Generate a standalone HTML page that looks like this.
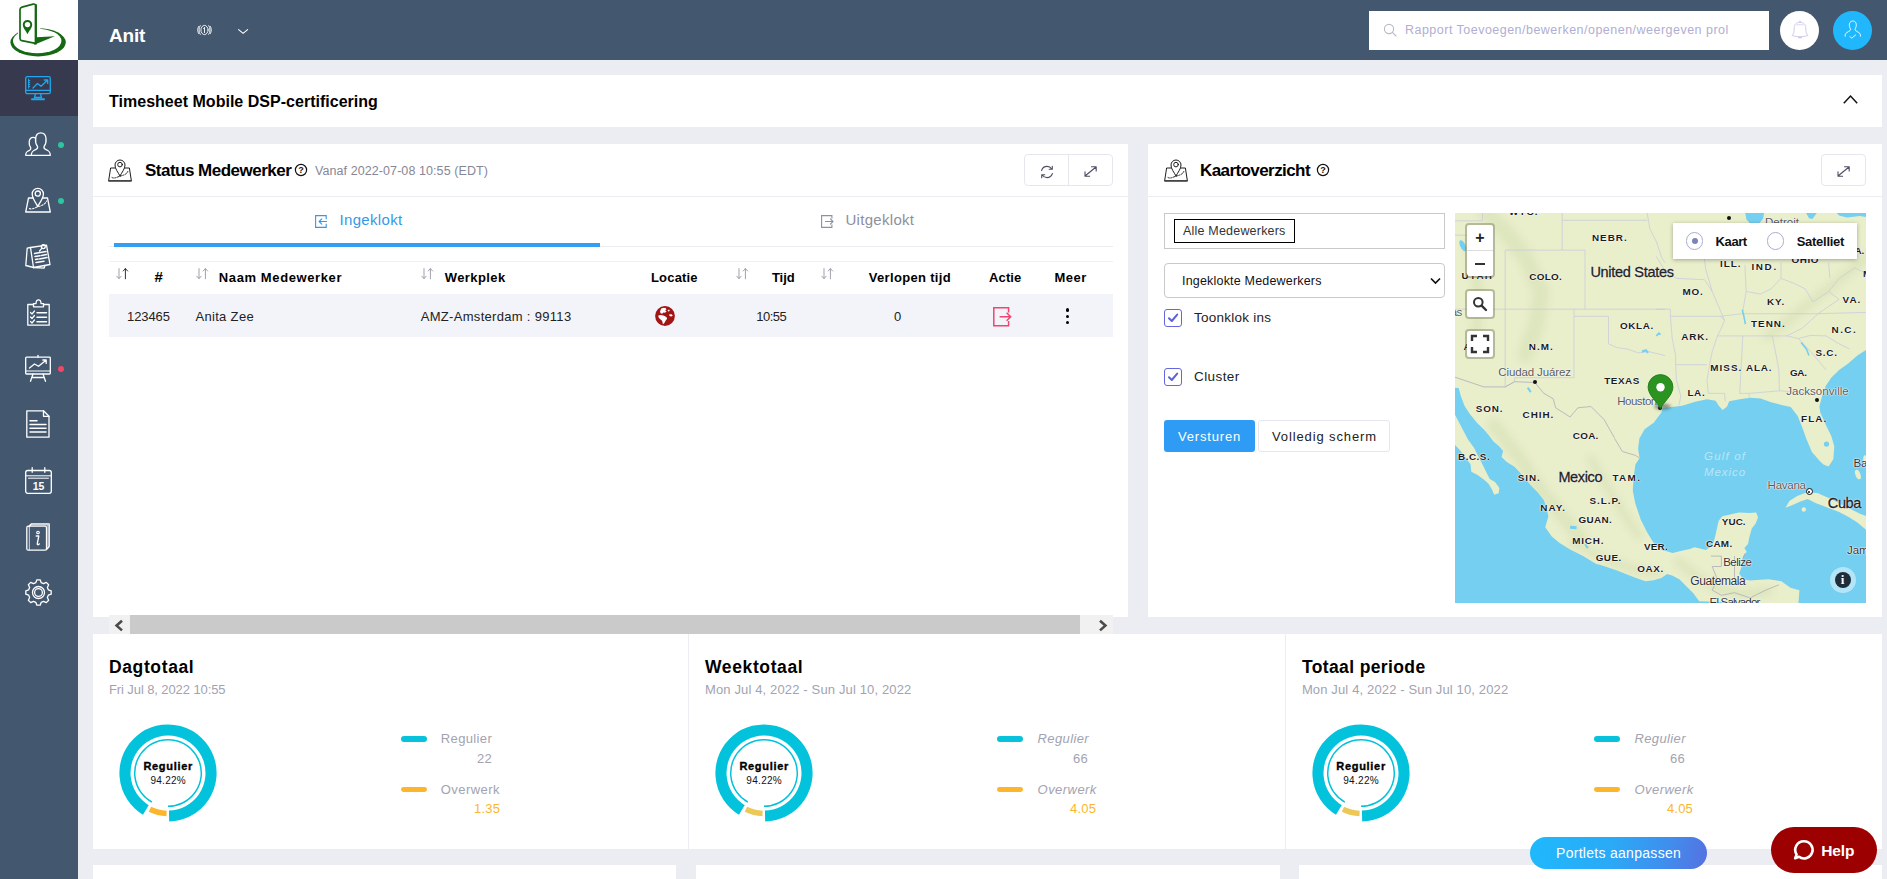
<!DOCTYPE html>
<html lang="nl"><head><meta charset="utf-8"><title>Timesheet Mobile</title>
<style>
html,body{margin:0;padding:0}
body{width:1887px;height:879px;overflow:hidden;position:relative;background:#ecedf3;font-family:"Liberation Sans",sans-serif}
svg{position:absolute;overflow:visible}
.ml span{text-shadow:0 0 1px #fff,0 0 1px #fff,0 0 2px #fff}
</style></head><body>
<div style="position:absolute;left:0px;top:0px;width:78px;height:879px;background:#43576f;"></div>
<div style="position:absolute;left:78px;top:0px;width:1809px;height:60px;background:#43576f;"></div>
<div style="position:absolute;left:0px;top:0px;width:78px;height:60px;background:#fff;"></div>
<div style="position:absolute;left:0px;top:60px;width:78px;height:56px;background:#373a4e;"></div>
<span style="position:absolute;top:26px;font:bold 19px/1 'Liberation Sans',sans-serif;color:#fff;white-space:nowrap;left:109.00px;letter-spacing:-0.2px;">Anit</span>
<div style="position:absolute;left:1369px;top:11px;width:400px;height:39px;background:#fff;"></div>
<span style="position:absolute;top:24px;font:normal 12.5px/1 'Liberation Sans',sans-serif;color:#b0aed2;white-space:nowrap;left:1405.00px;letter-spacing:0.48px;">Rapport Toevoegen/bewerken/openen/weergeven prol</span>
<div style="position:absolute;left:1780px;top:10.8px;width:39.2px;height:39.4px;background:#fff;border-radius:50%;"></div>
<div style="position:absolute;left:1832.8px;top:10.8px;width:39.4px;height:39.4px;background:#21b7fc;border-radius:50%;"></div>
<div style="position:absolute;left:57.5px;top:142px;width:6px;height:6px;background:#2fc4a0;border-radius:50%;"></div>
<div style="position:absolute;left:57.5px;top:198px;width:6px;height:6px;background:#2fc4a0;border-radius:50%;"></div>
<div style="position:absolute;left:57.5px;top:366px;width:6px;height:6px;background:#f0476b;border-radius:50%;"></div>
<svg width="26" height="25" viewBox="0 0 26 25" style="left:25px;top:76px;"><g fill="none" stroke="#22a7ee" stroke-width="1.3" stroke-linejoin="round" stroke-linecap="round"><rect x="0.7" y="0.7" width="24.6" height="17" rx="1.5"/><path d="M0.7 14.3H25.3"/><path d="M10.5 17.7L9.5 21.5H16.5L15.5 17.7"/><path d="M7 23.2H19" stroke-width="2"/><path d="M3.6 3V12.2M3.6 4.5h1.2M3.6 6.5h1.2M3.6 8.5h1.2M3.6 10.5h1.2" stroke-width="1"/><path d="M8 12L12.5 7.5L16 10.3L22.5 4.2M19.3 4h3.4v3.4"/></g></svg>
<svg width="26" height="24" viewBox="0 0 26 24" style="left:25px;top:132px;"><g fill="none" stroke="#fff" stroke-width="1.3" stroke-linejoin="round" stroke-linecap="round"><path d="M6.3 23.3C6.3 19.5 8 18.5 11 17.3C12.5 16.7 12.8 15.3 12.4 14.2C10.8 12.3 10.3 9.5 10.6 6.5C10.9 2.8 13 0.8 15.8 0.8C18.6 0.8 20.7 2.8 21 6.5C21.3 9.5 20.8 12.3 19.2 14.2C18.8 15.3 19.1 16.7 20.6 17.3C23.6 18.5 25.3 19.5 25.3 23.3Z"/><path d="M6.3 23.3H0.7C0.7 20 2 19.3 4.5 18.3C5.7 17.8 6 16.8 5.7 15.8C4.4 14.3 4 12 4.2 9.8C4.5 6.8 6 5.3 8.2 5.3C9.2 5.3 10 5.6 10.6 6.2"/></g></svg>
<svg width="26" height="26" viewBox="0 0 26 26" style="left:25px;top:187px;"><g fill="none" stroke="#fff" stroke-width="1.3" stroke-linejoin="round" stroke-linecap="round"><path d="M8 11H3.5L0.7 25H25.3L22.5 11H18"/><path d="M12.7 19.5C10.5 15 7.2 11.5 7.2 7A5.6 5.6 0 0 1 18.4 7C18.4 11.5 15 15 12.7 19.5Z"/><circle cx="12.8" cy="6.6" r="2.6"/><path d="M4.5 21.5C7 23 10 20.5 13.5 19.5C17 18.5 20 17.5 21.5 14" stroke-dasharray="1.6 1.6" stroke-width="1.1"/></g></svg>
<svg width="26" height="25" viewBox="0 0 26 25" style="left:25px;top:244px;"><g fill="none" stroke="#fff" stroke-width="1.3" stroke-linejoin="round" stroke-linecap="round"><path d="M5.5 3.5L21.5 1.2L25 20.5L8.5 23.5Z"/><path d="M5.5 3.5L2.2 4.2L0.8 21.5L8.5 23.5"/><path d="M8.5 23.5L19 24.2L20 21.5"/><circle cx="18.3" cy="2.6" r="2"/><path d="M16.8 4.3L14.5 7"/><path d="M9.5 9.5L21 7.6M10 12.5L15 11.7M16.5 11.4L21.5 10.6M10.5 15.5L13 15.1M14.5 14.9L22 13.6M11 18.5L19 17.2" stroke-width="1.5"/></g></svg>
<svg width="23" height="27" viewBox="0 0 23 27" style="left:26.5px;top:298.5px;"><g fill="none" stroke="#fff" stroke-width="1.3" stroke-linejoin="round" stroke-linecap="round"><path d="M6.5 5.5H0.8V26.2H22.2V5.5H16.5"/><path d="M6.5 7.8V4.6H9C9 2.5 9.8 0.8 11.5 0.8C13.2 0.8 14 2.5 14 4.6H16.5V7.8Z"/><path d="M3.5 13.5L5 15L7.5 12M3.5 18L5 19.5L7.5 16.5M3.5 22.5L5 24L7.5 21" stroke-width="1.2"/><path d="M10 13.7H19.5M10 18.2H19.5M10 22.7H19.5" stroke-width="1.5"/></g></svg>
<svg width="26" height="27" viewBox="0 0 26 27" style="left:25px;top:354.5px;"><g fill="none" stroke="#fff" stroke-width="1.3" stroke-linejoin="round" stroke-linecap="round"><path d="M13 0.5V2.2"/><rect x="0.7" y="2.2" width="24.6" height="16.8" rx="0.8"/><path d="M0.7 16H25.3" stroke-width="1"/><path d="M8 19L5.5 26.3M18 19L20.5 26.3M6.8 22.5H19.2"/><path d="M4.5 13L9.5 9L13.5 11.3L21 5.2M17.8 5h3.4v3.4"/></g></svg>
<svg width="24" height="28" viewBox="0 0 24 28" style="left:26px;top:410px;"><g fill="none" stroke="#fff" stroke-width="1.3" stroke-linejoin="round" stroke-linecap="round"><path d="M0.8 0.8H17.5L23 6.3V27.2H0.8Z"/><path d="M17.5 0.8V6.3H23"/><path d="M4 10.8H11M4 14.5H20M4 18.2H20M4 21.9H20" stroke-width="1.5"/></g></svg>
<svg width="27" height="27" viewBox="0 0 27 27" style="left:24.5px;top:466.5px;"><g fill="none" stroke="#fff" stroke-width="1.3" stroke-linejoin="round" stroke-linecap="round"><rect x="0.7" y="3.5" width="25.6" height="22.8" rx="2"/><path d="M0.7 8.8H26.3M3.5 11.2H23.5" stroke-width="1"/><path d="M7.2 0.7V5.3M19.8 0.7V5.3"/></g><text x="13.5" y="23" text-anchor="middle" font-family="Liberation Sans,sans-serif" font-weight="bold" font-size="10.5" fill="#fff">15</text></svg>
<svg width="24" height="28" viewBox="0 0 24 28" style="left:26px;top:522.5px;"><g fill="none" stroke="#fff" stroke-width="1.3" stroke-linejoin="round" stroke-linecap="round"><path d="M3 3.5L5.5 0.8H23.2V23.5L20.5 26.5"/><rect x="0.8" y="3.2" width="19.7" height="24" rx="1.5"/><path d="M3.3 3.5V27M4.2 1.9H22V24.8" stroke-width="0.8"/><circle cx="12" cy="9.5" r="1.3" stroke-width="1.1"/><path d="M10.2 13H12.8L11.3 20.5C11 22 12.5 22 13.2 20.8M10.8 21.5" stroke-width="1.3"/></g></svg>
<svg width="27" height="27" viewBox="0 0 27 27" style="left:24.5px;top:578.5px;"><g fill="none" stroke="#fff" stroke-width="1.3" stroke-linejoin="round" stroke-linecap="round"><path d="M10.78 3.67L11.84 0.81L15.16 0.81L16.22 3.67L18.53 4.63L21.30 3.35L23.65 5.70L22.37 8.47L23.33 10.78L26.19 11.84L26.19 15.16L23.33 16.22L22.37 18.53L23.65 21.30L21.30 23.65L18.53 22.37L16.22 23.33L15.16 26.19L11.84 26.19L10.78 23.33L8.47 22.37L5.70 23.65L3.35 21.30L4.63 18.53L3.67 16.22L0.81 15.16L0.81 11.84L3.67 10.78L4.63 8.47L3.35 5.70L5.70 3.35L8.47 4.63Z"/><circle cx="13.5" cy="13.5" r="6"/><circle cx="13.5" cy="13.5" r="3.9"/></g></svg>
<svg width="78" height="60" viewBox="0 0 78 60" style="left:0px;top:0px;"><ellipse cx="38.1" cy="42.3" rx="27.7" ry="14.1" fill="#156912"/>
<ellipse cx="37.2" cy="41.0" rx="24.2" ry="12.3" fill="#fff"/>
<polygon points="17.6,20 40.6,20 40.2,28.7 45,31 38,36 19,36 17.6,32.2" fill="#fff"/>
<polygon points="36.5,37.3 54.8,36.2 34.2,44.8 33,42" fill="#156912"/>
<path d="M20 9.6Q20 7.6 22 7.1L33.2 4.1Q35.6 3.6 35.6 6V43.4L21.8 40.6Q20 40.2 20 38.4Z" fill="#fff" stroke="#156912" stroke-width="1.7" stroke-linejoin="round"/>
<path d="M35.9 5V43.6" stroke="#156912" stroke-width="2.1" stroke-linecap="round"/>
<path d="M27.5 34.3C26 31 22.8 28 22.8 24.6A4.7 4.7 0 0 1 32.2 24.6C32.2 28 29 31 27.5 34.3Z" fill="#156912"/>
<circle cx="27.5" cy="24.6" r="2.7" fill="#fff"/></svg>
<div style="position:absolute;left:93px;top:75px;width:1789px;height:52px;background:#fff;"></div>
<span style="position:absolute;top:94px;font:bold 16px/1 'Liberation Sans',sans-serif;color:#000;white-space:nowrap;left:109.00px;letter-spacing:0.02px;">Timesheet Mobile DSP-certificering</span>
<div style="position:absolute;left:93px;top:144px;width:1035px;height:473px;background:#fff;"></div>
<div style="position:absolute;left:93px;top:196px;width:1035px;height:1px;background:#ecedf3;"></div>
<span style="position:absolute;top:162px;font:bold 17px/1 'Liberation Sans',sans-serif;color:#000;white-space:nowrap;left:145.00px;letter-spacing:-0.51px;">Status Medewerker</span>
<span style="position:absolute;top:165px;font:normal 12.5px/1 'Liberation Sans',sans-serif;color:#858796;white-space:nowrap;left:315.00px;letter-spacing:0.08px;">Vanaf 2022-07-08 10:55 (EDT)</span>
<div style="position:absolute;left:1024px;top:154.3px;width:88.6px;height:31.4px;background:#fff;box-sizing:border-box;border:1px solid #e6e7ee;border-radius:4px;"></div>
<div style="position:absolute;left:1068px;top:155px;width:1px;height:30px;background:#e6e7ee;"></div>
<span style="position:absolute;top:212px;font:normal 15px/1 'Liberation Sans',sans-serif;color:#3699e8;white-space:nowrap;left:339.50px;letter-spacing:0.33px;">Ingeklokt</span>
<span style="position:absolute;top:212px;font:normal 15px/1 'Liberation Sans',sans-serif;color:#8d90a0;white-space:nowrap;left:845.50px;letter-spacing:0.29px;">Uitgeklokt</span>
<div style="position:absolute;left:109px;top:246px;width:1004px;height:1px;background:#ecedf3;"></div>
<div style="position:absolute;left:114px;top:243px;width:486px;height:4px;background:#349ef3;"></div>
<div style="position:absolute;left:109px;top:261px;width:1004px;height:1px;background:#f0f1f6;"></div>
<span style="position:absolute;top:269px;font:bold 15px/1 'Liberation Sans',sans-serif;color:#000;white-space:nowrap;left:154.60px;">#</span>
<span style="position:absolute;top:271px;font:bold 13px/1 'Liberation Sans',sans-serif;color:#000;white-space:nowrap;left:218.80px;letter-spacing:0.61px;">Naam Medewerker</span>
<span style="position:absolute;top:271px;font:bold 13px/1 'Liberation Sans',sans-serif;color:#000;white-space:nowrap;left:444.70px;letter-spacing:0.43px;">Werkplek</span>
<span style="position:absolute;top:271px;font:bold 13px/1 'Liberation Sans',sans-serif;color:#000;white-space:nowrap;left:651.00px;letter-spacing:0.18px;">Locatie</span>
<span style="position:absolute;top:271px;font:bold 13px/1 'Liberation Sans',sans-serif;color:#000;white-space:nowrap;left:772.00px;letter-spacing:-0.09px;">Tijd</span>
<span style="position:absolute;top:271px;font:bold 13px/1 'Liberation Sans',sans-serif;color:#000;white-space:nowrap;left:868.80px;letter-spacing:0.32px;">Verlopen tijd</span>
<span style="position:absolute;top:271px;font:bold 13px/1 'Liberation Sans',sans-serif;color:#000;white-space:nowrap;left:989.00px;letter-spacing:0.14px;">Actie</span>
<span style="position:absolute;top:271px;font:bold 13px/1 'Liberation Sans',sans-serif;color:#000;white-space:nowrap;left:1054.40px;letter-spacing:0.54px;">Meer</span>
<div style="position:absolute;left:109px;top:294px;width:1004px;height:43px;background:#f3f4f9;"></div>
<span style="position:absolute;top:310px;font:normal 13px/1 'Liberation Sans',sans-serif;color:#222;white-space:nowrap;left:127.00px;letter-spacing:-0.1px;">123465</span>
<span style="position:absolute;top:310px;font:normal 13px/1 'Liberation Sans',sans-serif;color:#222;white-space:nowrap;left:195.40px;letter-spacing:0.33px;">Anita Zee</span>
<span style="position:absolute;top:310px;font:normal 13px/1 'Liberation Sans',sans-serif;color:#222;white-space:nowrap;left:420.70px;letter-spacing:0.31px;">AMZ-Amsterdam : 99113</span>
<span style="position:absolute;top:310px;font:normal 13px/1 'Liberation Sans',sans-serif;color:#222;white-space:nowrap;left:756.20px;letter-spacing:-0.47px;">10:55</span>
<span style="position:absolute;top:310px;font:normal 13px/1 'Liberation Sans',sans-serif;color:#222;white-space:nowrap;left:894.00px;">0</span>
<div style="position:absolute;left:1065.6px;top:308.40000000000003px;width:3.4px;height:3.4px;background:#000;border-radius:50%;"></div>
<div style="position:absolute;left:1065.6px;top:314.6px;width:3.4px;height:3.4px;background:#000;border-radius:50%;"></div>
<div style="position:absolute;left:1065.6px;top:320.90000000000003px;width:3.4px;height:3.4px;background:#000;border-radius:50%;"></div>
<div style="position:absolute;left:109px;top:615px;width:1004px;height:18.5px;background:#f1f1f1;"></div>
<div style="position:absolute;left:130px;top:615px;width:950px;height:18.5px;background:#cacaca;"></div>
<div style="position:absolute;left:1148px;top:144px;width:734px;height:473px;background:#fff;"></div>
<div style="position:absolute;left:1148px;top:196px;width:734px;height:1px;background:#ecedf3;"></div>
<span style="position:absolute;top:162px;font:bold 17px/1 'Liberation Sans',sans-serif;color:#000;white-space:nowrap;left:1200.00px;letter-spacing:-0.58px;">Kaartoverzicht</span>
<div style="position:absolute;left:1821px;top:154.2px;width:44.5px;height:31.5px;background:#fff;box-sizing:border-box;border:1px solid #e6e7ee;border-radius:4px;"></div>
<div style="position:absolute;left:1164px;top:213px;width:280.5px;height:36px;background:#fff;box-sizing:border-box;border:1px solid #c9c9c9;"></div>
<div style="position:absolute;left:1174px;top:219px;width:120.5px;height:24px;background:#fff;box-sizing:border-box;border:1px solid #000;"></div>
<span style="position:absolute;top:225px;font:normal 12.5px/1 'Liberation Sans',sans-serif;color:#333;white-space:nowrap;left:1183.00px;letter-spacing:0.2px;">Alle Medewerkers</span>
<div style="position:absolute;left:1164px;top:262.5px;width:280.5px;height:35.5px;background:#fff;box-sizing:border-box;border:1px solid #c9c9c9;border-radius:4px;"></div>
<span style="position:absolute;top:275px;font:normal 12.5px/1 'Liberation Sans',sans-serif;color:#111;white-space:nowrap;left:1182.00px;letter-spacing:0.19px;">Ingeklokte Medewerkers</span>
<div style="position:absolute;left:1164px;top:309px;width:18px;height:18px;background:#fff;box-sizing:border-box;border:1px solid #6467dd;border-radius:3px;"></div>
<div style="position:absolute;left:1164px;top:368px;width:18px;height:18px;background:#fff;box-sizing:border-box;border:1px solid #6467dd;border-radius:3px;"></div>
<span style="position:absolute;top:311px;font:normal 13.5px/1 'Liberation Sans',sans-serif;color:#222;white-space:nowrap;left:1194.00px;letter-spacing:0.24px;">Toonklok ins</span>
<span style="position:absolute;top:370px;font:normal 13.5px/1 'Liberation Sans',sans-serif;color:#222;white-space:nowrap;left:1194.00px;letter-spacing:0.42px;">Cluster</span>
<div style="position:absolute;left:1164px;top:420px;width:91px;height:32px;background:#2e9cf4;border-radius:3px;"></div>
<span style="position:absolute;top:430px;font:normal 13px/1 'Liberation Sans',sans-serif;color:#fff;white-space:nowrap;left:1178.00px;letter-spacing:0.82px;">Versturen</span>
<div style="position:absolute;left:1258.3px;top:420px;width:132.2px;height:32px;background:#fff;box-sizing:border-box;border:1px solid #e6e7ee;border-radius:3px;"></div>
<span style="position:absolute;top:430px;font:normal 13px/1 'Liberation Sans',sans-serif;color:#222;white-space:nowrap;left:1272.00px;letter-spacing:0.88px;">Volledig scherm</span>
<div class="ml" style="position:absolute;left:1455px;top:213px;width:411px;height:390px;overflow:hidden;background:#75cff0">
<svg width="411" height="390" viewBox="0 0 411 390" style="left:0;top:0">
<rect width="411" height="390" fill="#75cff0"/>
<polygon points="0.0,0.0 411.0,0.0 411.0,137.0 402.4,142.5 393.2,150.4 384.1,156.9 376.2,164.7 371.0,172.6 367.1,183.1 364.4,193.5 365.2,199.2 371.0,212.3 376.2,222.8 379.3,233.2 378.3,246.3 373.6,253.4 368.4,251.5 365.2,248.4 356.9,239.0 351.4,225.9 346.9,213.6 342.7,203.1 335.7,194.0 326.5,191.9 316.1,189.3 305.6,185.4 295.1,184.8 284.7,186.2 274.2,188.2 272.1,193.5 267.7,197.1 263.8,192.7 260.6,187.7 252.0,186.2 240.2,188.8 227.2,192.7 216.7,194.0 207.5,195.3 206.6,199.2 198.7,209.7 189.6,216.2 184.4,225.4 183.1,235.8 184.6,245.0 180.4,251.5 178.6,264.6 177.8,277.7 180.4,290.8 185.7,306.4 192.2,319.5 198.7,330.0 206.5,337.1 213.3,338.8 217.8,339.9 224.6,338.2 234.9,335.9 239.4,334.2 245.1,335.4 250.8,337.1 257.6,332.5 259.9,324.5 262.2,314.3 263.7,307.8 267.3,303.3 275.0,301.4 284.0,299.6 294.3,300.1 301.3,299.4 303.0,304.6 300.7,310.4 296.8,315.6 294.3,324.6 293.0,331.0 289.4,335.1 291.7,338.7 287.8,343.8 286.5,354.1 284.2,360.5 287.8,365.7 294.3,367.6 313.5,366.3 326.4,368.3 335.4,374.7 344.4,377.3 343.4,391.4 244.2,388.3 238.3,380.3 231.5,373.5 224.6,366.6 217.8,362.7 212.1,360.9 206.4,364.9 198.5,367.2 190.5,368.3 182.5,365.5 173.4,362.1 162.1,357.5 151.8,354.1 145.0,351.8 141.2,350.9 128.1,343.1 115.1,336.5 104.6,330.0 96.8,323.4 90.2,314.3 93.4,303.3 91.0,292.8 88.8,286.9 82.9,279.5 75.5,272.1 69.5,264.7 63.6,258.0 59.2,253.6 51.8,249.1 46.6,243.9 48.1,238.0 44.4,233.6 38.5,228.4 34.0,222.5 29.6,217.3 22.2,209.9 14.8,201.0 9.6,192.9 5.9,183.3 3.7,175.1 0.0,174.7" fill="#e9eecb"/>
<polygon points="0.0,201.8 4.4,209.9 8.9,218.8 13.3,226.9 19.2,235.1 22.9,242.5 27.4,251.3 31.1,258.7 34.8,266.1 40.0,269.1 44.4,275.0 43.7,280.2 39.2,281.7 37.0,276.5 33.3,270.6 28.1,266.1 22.2,261.7 16.3,258.7 15.5,251.3 8.9,242.5 4.4,236.5 0.0,232.1" fill="#e9eecb"/>
<polygon points="330.4,294.7 334.4,288.1 342.2,282.9 352.7,279.0 363.1,280.3 373.6,285.0 384.1,290.2 394.5,295.5 405.0,300.7 411.8,303.3 411.8,317.4 402.4,309.6 394.5,304.4 384.1,299.1 371.0,293.9 360.5,290.0 352.7,286.0 344.8,288.7 337.0,292.3" fill="#e9eecb"/>
<defs><filter id="tb" x="-20%" y="-20%" width="140%" height="140%"><feGaussianBlur stdDeviation="3.2"/></filter><clipPath id="lc"><polygon points="0.0,0.0 411.0,0.0 411.0,137.0 402.4,142.5 393.2,150.4 384.1,156.9 376.2,164.7 371.0,172.6 367.1,183.1 364.4,193.5 365.2,199.2 371.0,212.3 376.2,222.8 379.3,233.2 378.3,246.3 373.6,253.4 368.4,251.5 365.2,248.4 356.9,239.0 351.4,225.9 346.9,213.6 342.7,203.1 335.7,194.0 326.5,191.9 316.1,189.3 305.6,185.4 295.1,184.8 284.7,186.2 274.2,188.2 272.1,193.5 267.7,197.1 263.8,192.7 260.6,187.7 252.0,186.2 240.2,188.8 227.2,192.7 216.7,194.0 207.5,195.3 206.6,199.2 198.7,209.7 189.6,216.2 184.4,225.4 183.1,235.8 184.6,245.0 180.4,251.5 178.6,264.6 177.8,277.7 180.4,290.8 185.7,306.4 192.2,319.5 198.7,330.0 206.5,337.1 213.3,338.8 217.8,339.9 224.6,338.2 234.9,335.9 239.4,334.2 245.1,335.4 250.8,337.1 257.6,332.5 259.9,324.5 262.2,314.3 263.7,307.8 267.3,303.3 275.0,301.4 284.0,299.6 294.3,300.1 301.3,299.4 303.0,304.6 300.7,310.4 296.8,315.6 294.3,324.6 293.0,331.0 289.4,335.1 291.7,338.7 287.8,343.8 286.5,354.1 284.2,360.5 287.8,365.7 294.3,367.6 313.5,366.3 326.4,368.3 335.4,374.7 344.4,377.3 343.4,391.4 244.2,388.3 238.3,380.3 231.5,373.5 224.6,366.6 217.8,362.7 212.1,360.9 206.4,364.9 198.5,367.2 190.5,368.3 182.5,365.5 173.4,362.1 162.1,357.5 151.8,354.1 145.0,351.8 141.2,350.9 128.1,343.1 115.1,336.5 104.6,330.0 96.8,323.4 90.2,314.3 93.4,303.3 91.0,292.8 88.8,286.9 82.9,279.5 75.5,272.1 69.5,264.7 63.6,258.0 59.2,253.6 51.8,249.1 46.6,243.9 48.1,238.0 44.4,233.6 38.5,228.4 34.0,222.5 29.6,217.3 22.2,209.9 14.8,201.0 9.6,192.9 5.9,183.3 3.7,175.1 0.0,174.7"/></clipPath></defs>
<g clip-path="url(#lc)"><g filter="url(#tb)" fill="none" stroke="#cfdcae" stroke-linecap="round" stroke-linejoin="round" opacity="0.42">
<polyline points="31.4,0.0 52.3,20.9 70.6,44.5 86.3,78.5 81.1,112.4 70.6,141.2" stroke-width="16"/>
<polyline points="15.7,31.4 23.5,78.5 20.9,125.5" stroke-width="10"/>
<polyline points="39.2,212.3 65.4,246.3 86.3,277.7 109.8,306.4 125.5,324.7" stroke-width="13"/>
<polyline points="136.0,246.3 151.7,272.4 167.4,298.6 183.1,322.1" stroke-width="8"/>
<polyline points="117.7,330.0 146.4,344.4 177.8,356.1 201.4,360.1" stroke-width="8"/>
<polyline points="223.6,349.0 242.8,364.4 262.1,376.0 287.8,381.1 313.5,378.5" stroke-width="9"/>
<polyline points="313.4,122.9 337.0,104.6 363.1,83.7 389.3,62.8 411.0,44.5" stroke-width="9"/>
</g></g>
<circle cx="348.8" cy="296.5" r="2.2" fill="#e9eecb"/>
<ellipse cx="402.9" cy="261.5" rx="2.5" ry="5" fill="#e9eecb" transform="rotate(-20 402.9 261.5)"/>
<ellipse cx="410.2" cy="246.3" rx="2" ry="4" fill="#e9eecb"/>
<polygon points="290.2,0.0 291.5,6.5 295.1,10.5 304.3,10.5 308.2,5.2 309.0,0.0" fill="#75cff0"/>
<polygon points="351.1,0.0 354.0,5.2 357.4,6.0 361.8,0.0" fill="#75cff0"/>
<polygon points="381.7,0.0 384.1,2.6 391.9,4.4 405.0,3.1 411.8,4.2 411.8,0.0" fill="#75cff0"/>
<ellipse cx="7.8" cy="32.7" rx="2.6" ry="6" fill="#75cff0" transform="rotate(-25 7.8 32.7)"/>
<circle cx="371.5" cy="231.1" r="2.6" fill="#75cff0"/>
<polyline points="50.2,37.1 50.2,173.9" fill="none" stroke="#c6c9de" stroke-width="0.7"/>
<polyline points="50.2,37.1 130.0,37.1 130.0,96.2" fill="none" stroke="#c6c9de" stroke-width="0.7"/>
<polyline points="0.0,96.2 210.0,96.2" fill="none" stroke="#c6c9de" stroke-width="0.7"/>
<polyline points="119.0,96.2 119.0,164.7 59.6,164.7 59.6,168.7 50.2,173.9" fill="none" stroke="#c6c9de" stroke-width="0.7"/>
<polyline points="119.0,103.3 153.5,103.3 153.5,130.8 162.1,134.7 172.6,136.0 183.1,139.9 193.5,138.6 210.0,142.5" fill="none" stroke="#c6c9de" stroke-width="0.7"/>
<polyline points="107.2,0.0 107.2,37.1" fill="none" stroke="#c6c9de" stroke-width="0.7"/>
<polyline points="107.2,7.3 192.2,7.3" fill="none" stroke="#c6c9de" stroke-width="0.7"/>
<polyline points="192.2,0.0 194.8,15.7 201.4,28.8 206.6,44.5 210.0,49.7" fill="none" stroke="#c6c9de" stroke-width="0.7"/>
<polyline points="27.5,0.0 27.5,7.8 0.0,7.8" fill="none" stroke="#c6c9de" stroke-width="0.7"/>
<polyline points="0.0,22.2 11.8,22.2" fill="none" stroke="#c6c9de" stroke-width="0.7"/>
<polyline points="0.0,164.2 28.8,173.9 50.2,173.9" fill="none" stroke="#aeadbb" stroke-width="0.8"/>
<polyline points="50.2,173.9 59.6,168.7 79.8,169.5 88.9,180.4 98.1,185.7 100.7,194.8 115.1,204.0 122.9,194.8 136.0,193.5 149.1,206.6 159.5,224.9" fill="none" stroke="#aeadbb" stroke-width="0.8"/>
<polyline points="159.5,225.4 167.4,238.5 180.4,242.4 184.6,245.0" fill="none" stroke="#aeadbb" stroke-width="0.8"/>
<polyline points="201.0,96.2 215.4,96.2 215.4,103.3 265.1,103.3" fill="none" stroke="#c6c9de" stroke-width="0.7"/>
<polyline points="215.4,103.3 217.2,125.5 220.6,142.5 220.6,151.7 252.0,151.7" fill="none" stroke="#c6c9de" stroke-width="0.7"/>
<polyline points="220.6,151.7 221.4,167.4 225.8,183.1 224.0,192.2" fill="none" stroke="#c6c9de" stroke-width="0.7"/>
<polyline points="265.1,103.3 269.5,107.2 266.4,115.1 262.5,122.9 257.2,138.6 254.6,151.7 252.0,167.4 253.3,180.4 269.5,180.4 270.3,188.3" fill="none" stroke="#c6c9de" stroke-width="0.7"/>
<polyline points="262.5,122.9 331.8,122.9" fill="none" stroke="#c6c9de" stroke-width="0.7"/>
<polyline points="265.1,103.3 287.3,100.7 363.1,100.7 411.0,99.4" fill="none" stroke="#c6c9de" stroke-width="0.7"/>
<polyline points="287.8,122.9 284.7,180.4 293.8,180.4 294.6,185.7" fill="none" stroke="#c6c9de" stroke-width="0.7"/>
<polyline points="317.4,122.9 323.9,156.9 324.4,177.8 293.8,180.4" fill="none" stroke="#c6c9de" stroke-width="0.7"/>
<polyline points="324.4,177.8 357.9,180.4 360.5,183.1" fill="none" stroke="#c6c9de" stroke-width="0.7"/>
<polyline points="331.8,122.9 343.5,125.5 357.9,141.2 371.0,156.9" fill="none" stroke="#c6c9de" stroke-width="0.7"/>
<polyline points="331.8,122.9 347.4,115.1 363.1,100.7" fill="none" stroke="#c6c9de" stroke-width="0.7"/>
<polyline points="343.5,125.5 355.3,122.4 371.0,122.9 384.1,130.8 394.5,136.0" fill="none" stroke="#c6c9de" stroke-width="0.7"/>
<polyline points="201.0,43.1 211.5,60.1 221.9,65.4 249.4,66.7 257.2,78.5 269.5,107.2" fill="none" stroke="#c6c9de" stroke-width="0.7"/>
<polyline points="249.4,45.8 250.7,56.2 257.2,78.5" fill="none" stroke="#c6c9de" stroke-width="0.7"/>
<polyline points="289.9,52.3 291.2,78.5 287.3,100.7" fill="none" stroke="#c6c9de" stroke-width="0.7"/>
<polyline points="291.2,78.5 305.6,81.1 316.1,75.8 326.0,65.4 326.0,49.7" fill="none" stroke="#c6c9de" stroke-width="0.7"/>
<polyline points="326.0,65.4 339.6,70.6 350.1,75.8 357.9,88.9 373.6,78.5 384.1,86.3 363.1,100.7" fill="none" stroke="#c6c9de" stroke-width="0.7"/>
<polyline points="373.6,78.5 384.1,65.4 399.7,54.9 411.0,60.1" fill="none" stroke="#c6c9de" stroke-width="0.7"/>
<polyline points="373.6,49.7 374.9,65.4" fill="none" stroke="#c6c9de" stroke-width="0.7"/>
<polyline points="255.9,343.1 266.4,343.1 266.4,353.5 257.2,353.5 262.5,366.6 257.2,377.1" fill="none" stroke="#aeadbb" stroke-width="0.8"/>
<polyline points="279.5,343.1 279.5,369.2" fill="none" stroke="#aeadbb" stroke-width="0.8"/>
<polyline points="289.9,340.4 287.3,348.3" fill="none" stroke="#aeadbb" stroke-width="0.8"/>
<polyline points="279.5,369.2 291.2,366.6" fill="none" stroke="#aeadbb" stroke-width="0.8"/>
<polyline points="257.2,377.1 266.4,382.3 279.5,379.7 295.1,384.9 310.8,377.1 323.9,371.8" fill="none" stroke="#aeadbb" stroke-width="0.8"/>
<polyline points="287.3,96.8 288.9,103.3 290.4,111.1" fill="none" stroke="#75cff0" stroke-width="1.6"/>
<polyline points="346.1,129.4 351.4,136.0 354.0,142.5" fill="none" stroke="#75cff0" stroke-width="1.6"/>
<polyline points="201.4,122.9 204.0,120.3 205.5,121.6" fill="none" stroke="#75cff0" stroke-width="1.8"/>
<polyline points="187.0,138.6 190.9,137.3 193.0,139.9" fill="none" stroke="#75cff0" stroke-width="2.2"/>
<polyline points="115.1,314.3 121.6,314.8" fill="none" stroke="#75cff0" stroke-width="3"/>
<polyline points="130.2,331.3 132.8,335.2" fill="none" stroke="#75cff0" stroke-width="2"/>
<polyline points="72.7,174.7 75.8,179.1" fill="none" stroke="#75cff0" stroke-width="2"/>
</svg>
<span style="position:absolute;top:20px;font:bold 9.9px/1 'Liberation Sans',sans-serif;color:#1c1c1c;white-space:nowrap;left:136.90px;letter-spacing:1.01px;">NEBR.</span>
<span style="position:absolute;top:59px;font:bold 9.9px/1 'Liberation Sans',sans-serif;color:#1c1c1c;white-space:nowrap;left:74.30px;letter-spacing:0.27px;">COLO.</span>
<span style="position:absolute;top:58px;font:bold 9.9px/1 'Liberation Sans',sans-serif;color:#1c1c1c;white-space:nowrap;left:6.50px;letter-spacing:1.23px;">UTAH</span>
<span style="position:absolute;top:74px;font:bold 9.9px/1 'Liberation Sans',sans-serif;color:#1c1c1c;white-space:nowrap;left:227.60px;letter-spacing:0.7px;">MO.</span>
<span style="position:absolute;top:46px;font:bold 9.9px/1 'Liberation Sans',sans-serif;color:#1c1c1c;white-space:nowrap;left:265.00px;letter-spacing:0.98px;">ILL.</span>
<span style="position:absolute;top:49px;font:bold 9.9px/1 'Liberation Sans',sans-serif;color:#1c1c1c;white-space:nowrap;left:296.40px;letter-spacing:1.67px;">IND.</span>
<span style="position:absolute;top:42px;font:bold 9.9px/1 'Liberation Sans',sans-serif;color:#1c1c1c;white-space:nowrap;left:336.60px;letter-spacing:0.5px;">OHIO</span>
<span style="position:absolute;top:33px;font:bold 9.9px/1 'Liberation Sans',sans-serif;color:#1c1c1c;white-space:nowrap;left:394.00px;letter-spacing:-0.29px;">PA.</span>
<span style="position:absolute;top:56px;font:bold 9.9px/1 'Liberation Sans',sans-serif;color:#1c1c1c;white-space:nowrap;left:408.00px;letter-spacing:-0.44px;">MD.</span>
<span style="position:absolute;top:84px;font:bold 9.9px/1 'Liberation Sans',sans-serif;color:#1c1c1c;white-space:nowrap;left:312.00px;letter-spacing:0.97px;">KY.</span>
<span style="position:absolute;top:82px;font:bold 9.9px/1 'Liberation Sans',sans-serif;color:#1c1c1c;white-space:nowrap;left:387.60px;letter-spacing:0.95px;">VA.</span>
<span style="position:absolute;top:108px;font:bold 9.9px/1 'Liberation Sans',sans-serif;color:#1c1c1c;white-space:nowrap;left:165.00px;letter-spacing:0.61px;">OKLA.</span>
<span style="position:absolute;top:119px;font:bold 9.9px/1 'Liberation Sans',sans-serif;color:#1c1c1c;white-space:nowrap;left:226.20px;letter-spacing:0.87px;">ARK.</span>
<span style="position:absolute;top:106px;font:bold 9.9px/1 'Liberation Sans',sans-serif;color:#1c1c1c;white-space:nowrap;left:295.90px;letter-spacing:1.06px;">TENN.</span>
<span style="position:absolute;top:112px;font:bold 9.9px/1 'Liberation Sans',sans-serif;color:#1c1c1c;white-space:nowrap;left:376.60px;letter-spacing:1.44px;">N.C.</span>
<span style="position:absolute;top:135px;font:bold 9.9px/1 'Liberation Sans',sans-serif;color:#1c1c1c;white-space:nowrap;left:360.40px;letter-spacing:0.77px;">S.C.</span>
<span style="position:absolute;top:129px;font:bold 9.9px/1 'Liberation Sans',sans-serif;color:#1c1c1c;white-space:nowrap;left:73.80px;letter-spacing:1.01px;">N.M.</span>
<span style="position:absolute;top:150px;font:bold 9.9px/1 'Liberation Sans',sans-serif;color:#1c1c1c;white-space:nowrap;left:255.30px;letter-spacing:1.02px;">MISS.</span>
<span style="position:absolute;top:150px;font:bold 9.9px/1 'Liberation Sans',sans-serif;color:#1c1c1c;white-space:nowrap;left:291.00px;letter-spacing:0.84px;">ALA.</span>
<span style="position:absolute;top:155px;font:bold 9.9px/1 'Liberation Sans',sans-serif;color:#1c1c1c;white-space:nowrap;left:335.00px;letter-spacing:-0.31px;">GA.</span>
<span style="position:absolute;top:163px;font:bold 9.9px/1 'Liberation Sans',sans-serif;color:#1c1c1c;white-space:nowrap;left:149.30px;letter-spacing:0.52px;">TEXAS</span>
<span style="position:absolute;top:175px;font:bold 9.9px/1 'Liberation Sans',sans-serif;color:#1c1c1c;white-space:nowrap;left:232.40px;letter-spacing:0.67px;">LA.</span>
<span style="position:absolute;top:201px;font:bold 9.9px/1 'Liberation Sans',sans-serif;color:#1c1c1c;white-space:nowrap;left:346.00px;letter-spacing:1.1px;">FLA.</span>
<span style="position:absolute;top:191px;font:bold 9.9px/1 'Liberation Sans',sans-serif;color:#1c1c1c;white-space:nowrap;left:20.80px;letter-spacing:0.87px;">SON.</span>
<span style="position:absolute;top:197px;font:bold 9.9px/1 'Liberation Sans',sans-serif;color:#1c1c1c;white-space:nowrap;left:67.60px;letter-spacing:0.94px;">CHIH.</span>
<span style="position:absolute;top:218px;font:bold 9.9px/1 'Liberation Sans',sans-serif;color:#1c1c1c;white-space:nowrap;left:117.80px;letter-spacing:0.29px;">COA.</span>
<span style="position:absolute;top:239px;font:bold 9.9px/1 'Liberation Sans',sans-serif;color:#1c1c1c;white-space:nowrap;left:3.00px;letter-spacing:0.53px;">B.C.S.</span>
<span style="position:absolute;top:260px;font:bold 9.9px/1 'Liberation Sans',sans-serif;color:#1c1c1c;white-space:nowrap;left:62.80px;letter-spacing:0.94px;">SIN.</span>
<span style="position:absolute;top:260px;font:bold 9.9px/1 'Liberation Sans',sans-serif;color:#1c1c1c;white-space:nowrap;left:157.40px;letter-spacing:1.37px;">TAM.</span>
<span style="position:absolute;top:283px;font:bold 9.9px/1 'Liberation Sans',sans-serif;color:#1c1c1c;white-space:nowrap;left:134.50px;letter-spacing:0.97px;">S.L.P.</span>
<span style="position:absolute;top:290px;font:bold 9.9px/1 'Liberation Sans',sans-serif;color:#1c1c1c;white-space:nowrap;left:85.30px;letter-spacing:1.06px;">NAY.</span>
<span style="position:absolute;top:302px;font:bold 9.9px/1 'Liberation Sans',sans-serif;color:#1c1c1c;white-space:nowrap;left:123.50px;letter-spacing:0.37px;">GUAN.</span>
<span style="position:absolute;top:323px;font:bold 9.9px/1 'Liberation Sans',sans-serif;color:#1c1c1c;white-space:nowrap;left:117.30px;letter-spacing:0.78px;">MICH.</span>
<span style="position:absolute;top:340px;font:bold 9.9px/1 'Liberation Sans',sans-serif;color:#1c1c1c;white-space:nowrap;left:140.70px;letter-spacing:0.47px;">GUE.</span>
<span style="position:absolute;top:329px;font:bold 9.9px/1 'Liberation Sans',sans-serif;color:#1c1c1c;white-space:nowrap;left:189.00px;letter-spacing:0.21px;">VER.</span>
<span style="position:absolute;top:351px;font:bold 9.9px/1 'Liberation Sans',sans-serif;color:#1c1c1c;white-space:nowrap;left:182.20px;letter-spacing:0.61px;">OAX.</span>
<span style="position:absolute;top:304px;font:bold 9.9px/1 'Liberation Sans',sans-serif;color:#1c1c1c;white-space:nowrap;left:266.80px;letter-spacing:0.06px;">YUC.</span>
<span style="position:absolute;top:326px;font:bold 9.9px/1 'Liberation Sans',sans-serif;color:#1c1c1c;white-space:nowrap;left:251.00px;letter-spacing:0.3px;">CAM.</span>
<span style="position:absolute;top:-6px;font:bold 9.9px/1 'Liberation Sans',sans-serif;color:#1c1c1c;white-space:nowrap;left:54.00px;letter-spacing:0.76px;">WYO.</span>
<span style="position:absolute;top:129px;font:bold 9.9px/1 'Liberation Sans',sans-serif;color:#1c1c1c;white-space:nowrap;left:8.50px;letter-spacing:1.05px;">ARIZ.</span>
<span style="position:absolute;top:52px;font:normal 14.5px/1 'Liberation Sans',sans-serif;color:#222;white-space:nowrap;left:135.40px;letter-spacing:-0.28px;-webkit-text-stroke:0.3px #222;">United States</span>
<span style="position:absolute;top:257px;font:normal 14.5px/1 'Liberation Sans',sans-serif;color:#222;white-space:nowrap;left:103.40px;letter-spacing:-0.35px;-webkit-text-stroke:0.3px #222;">Mexico</span>
<span style="position:absolute;top:283px;font:normal 14.5px/1 'Liberation Sans',sans-serif;color:#222;white-space:nowrap;left:372.80px;letter-spacing:-0.36px;-webkit-text-stroke:0.3px #222;">Cuba</span>
<span style="position:absolute;top:362px;font:normal 12px/1 'Liberation Sans',sans-serif;color:#333;white-space:nowrap;left:235.20px;letter-spacing:-0.39px;">Guatemala</span>
<span style="position:absolute;top:344px;font:normal 11.5px/1 'Liberation Sans',sans-serif;color:#333;white-space:nowrap;left:268.20px;letter-spacing:-0.5px;">Belize</span>
<span style="position:absolute;top:384px;font:normal 11.5px/1 'Liberation Sans',sans-serif;color:#333;white-space:nowrap;left:254.50px;letter-spacing:-0.79px;">El Salvador</span>
<span style="position:absolute;top:245px;font:normal 11.5px/1 'Liberation Sans',sans-serif;color:#333;white-space:nowrap;left:398.60px;letter-spacing:-0.34px;">Bahamas</span>
<span style="position:absolute;top:332px;font:normal 11.5px/1 'Liberation Sans',sans-serif;color:#333;white-space:nowrap;left:391.90px;letter-spacing:0.04px;">Jamaica</span>
<span style="position:absolute;top:154px;font:normal 11.5px/1 'Liberation Sans',sans-serif;color:#5a5a5a;white-space:nowrap;left:43.30px;letter-spacing:-0.12px;">Ciudad Juárez</span>
<span style="position:absolute;top:183px;font:normal 11.5px/1 'Liberation Sans',sans-serif;color:#5a5a5a;white-space:nowrap;left:162.20px;letter-spacing:-0.47px;">Houston</span>
<span style="position:absolute;top:173px;font:normal 11.5px/1 'Liberation Sans',sans-serif;color:#5a5a5a;white-space:nowrap;left:331.20px;letter-spacing:0.05px;">Jacksonville</span>
<span style="position:absolute;top:267px;font:normal 11.5px/1 'Liberation Sans',sans-serif;color:#5a5a5a;white-space:nowrap;left:312.60px;letter-spacing:-0.26px;">Havana</span>
<span style="position:absolute;top:4px;font:normal 11.5px/1 'Liberation Sans',sans-serif;color:#5a5a5a;white-space:nowrap;left:310.00px;letter-spacing:0.02px;">Detroit</span>
<span style="position:absolute;top:-10px;font:normal 11.5px/1 'Liberation Sans',sans-serif;color:#5a5a5a;white-space:nowrap;left:256.00px;letter-spacing:-1.0px;">Madison</span>
<span style="position:absolute;top:94px;font:normal 11.5px/1 'Liberation Sans',sans-serif;color:#5a5a5a;white-space:nowrap;left:-42.00px;letter-spacing:-0.56px;">Las Vegas</span>
<span style="position:absolute;top:238px;font:italic normal 11.5px/1 'Liberation Sans',sans-serif;color:#b9e6f7;white-space:nowrap;left:249.00px;letter-spacing:1.19px;text-shadow:none;">Gulf of</span>
<span style="position:absolute;top:254px;font:italic normal 11.5px/1 'Liberation Sans',sans-serif;color:#b9e6f7;white-space:nowrap;left:249.00px;letter-spacing:0.94px;text-shadow:none;">Mexico</span>
<div style="position:absolute;left:77.59999999999991px;top:167px;width:4px;height:4px;background:#111;border-radius:50%;"></div>
<div style="position:absolute;left:203.20000000000005px;top:192.7px;width:4px;height:4px;background:#111;border-radius:50%;"></div>
<div style="position:absolute;left:360.29999999999995px;top:185px;width:4px;height:4px;background:#111;border-radius:50%;"></div>
<div style="position:absolute;left:272px;top:2.6999999999999886px;width:4px;height:4px;background:#111;border-radius:50%;"></div>
<div style="position:absolute;left:350.5999999999999px;top:275.3px;width:7px;height:7px;background:#fff;border-radius:50%;box-sizing:border-box;border:1.3px solid #111;"></div>
<div style="position:absolute;left:352.79999999999995px;top:277.5px;width:2.6px;height:2.6px;background:#111;border-radius:50%;"></div>
<svg width="27" height="36" viewBox="0 0 27 36" style="left:192.3px;top:160.6px"><defs><filter id="mb" x="-50%" y="-50%" width="200%" height="200%"><feGaussianBlur stdDeviation="1.6"/></filter></defs><ellipse cx="15.5" cy="32.6" rx="8.5" ry="3" fill="rgba(40,40,30,.45)" filter="url(#mb)"/><path d="M13.5 34.6 C11 28.5 1.1 21.5 1.1 13 A12.4 12.4 0 0 1 25.9 13 C25.9 21.5 16 28.5 13.5 34.6Z" fill="#2b9320" stroke="#1f7a18" stroke-width="0.9"/><circle cx="13.5" cy="13.2" r="4.2" fill="#fff"/></svg>
<div style="position:absolute;left:10px;top:10px;width:30px;height:55px;background:#fff;box-sizing:border-box;border:2px solid rgba(90,90,60,.35);border-radius:4px;background-clip:padding-box;"></div>
<div style="position:absolute;left:12px;top:37px;width:26px;height:1px;background:#ddd;"></div>
<div style="position:absolute;left:10px;top:76px;width:30px;height:30px;background:#fff;box-sizing:border-box;border:2px solid rgba(90,90,60,.35);border-radius:4px;background-clip:padding-box;"></div>
<div style="position:absolute;left:10px;top:116px;width:30px;height:30px;background:#fff;box-sizing:border-box;border:2px solid rgba(90,90,60,.35);border-radius:4px;background-clip:padding-box;"></div>
<span style="position:absolute;top:17px;font:bold 16px/1 'Liberation Sans',sans-serif;color:#222;white-space:nowrap;left:-175.00px;width:400px;text-align:center;text-shadow:none;">+</span>
<div style="position:absolute;left:20px;top:50px;width:10px;height:2px;background:#333;"></div>
<svg width="16" height="16" viewBox="0 0 16 16" style="left:17px;top:83px"><circle cx="6.3" cy="6.3" r="4.3" fill="none" stroke="#333" stroke-width="2"/><path d="M9.6 9.6 L14 14" stroke="#333" stroke-width="2.4" stroke-linecap="round"/></svg>
<svg width="18" height="18" viewBox="0 0 18 18" style="left:16px;top:122px"><path d="M1 6V1h5 M12 1h5v5 M17 12v5h-5 M6 17H1v-5" fill="none" stroke="#333" stroke-width="2.4"/></svg>
<div style="position:absolute;left:218px;top:10px;width:184px;height:35.5px;background:#fff;box-shadow:0 1px 4px rgba(0,0,0,.3);"></div>
<div style="position:absolute;left:231.0999999999999px;top:19.30000000000001px;width:17.4px;height:17.4px;background:#fff;box-sizing:border-box;border:1px solid #a9acd0;border-radius:50%;"></div>
<div style="position:absolute;left:236.70000000000005px;top:25px;width:6px;height:6px;background:#7a84b8;border-radius:50%;"></div>
<div style="position:absolute;left:312.0999999999999px;top:19.30000000000001px;width:17.4px;height:17.4px;background:#fff;box-sizing:border-box;border:1px solid #a9acd0;border-radius:50%;"></div>
<span style="position:absolute;top:22px;font:bold 13px/1 'Liberation Sans',sans-serif;color:#111;white-space:nowrap;left:260.60px;letter-spacing:-0.41px;text-shadow:none;">Kaart</span>
<span style="position:absolute;top:22px;font:bold 13px/1 'Liberation Sans',sans-serif;color:#111;white-space:nowrap;left:341.70px;letter-spacing:-0.27px;text-shadow:none;">Satelliet</span>
<div style="position:absolute;left:374.5999999999999px;top:353.70000000000005px;width:26px;height:26px;background:rgba(255,255,255,.45);border-radius:50%;"></div>
<div style="position:absolute;left:379.5999999999999px;top:358.70000000000005px;width:16px;height:16px;background:#1f2d3b;border-radius:50%;"></div>
<span style="position:absolute;top:360px;font:bold 13px/1 'Liberation Sans',sans-serif;color:#fff;white-space:nowrap;left:187.60px;width:400px;text-align:center;text-shadow:none;font-family:'Liberation Serif',serif;">i</span>
</div>
<div style="position:absolute;left:93px;top:633.5px;width:1789px;height:215px;background:#fff;"></div>
<div style="position:absolute;left:688px;top:633.5px;width:1px;height:215px;background:#ecedf3;"></div>
<div style="position:absolute;left:1285px;top:633.5px;width:1px;height:215px;background:#ecedf3;"></div>
<span style="position:absolute;top:659px;font:bold 17.5px/1 'Liberation Sans',sans-serif;color:#000;white-space:nowrap;left:109.00px;letter-spacing:0.62px;">Dagtotaal</span>
<span style="position:absolute;top:683px;font:normal 13px/1 'Liberation Sans',sans-serif;color:#a2a3b0;white-space:nowrap;left:109.00px;letter-spacing:-0.1px;">Fri Jul 8, 2022 10:55</span>
<svg width="100" height="100" viewBox="0 0 100 100" style="left:118.2px;top:722.8px"><path d="M27.83 86.90A43.05 43.05 0 1 1 51.05 93.04" fill="none" stroke="#03c3dc" stroke-width="11.1"/><path d="M33.86 79.12A33.3 33.3 0 1 1 50.00 83.30" fill="none" stroke="#03c3dc" stroke-width="1.5"/><path d="M48.59 90.48A40.5 40.5 0 0 1 31.93 86.24" fill="none" stroke="#fbb62d" stroke-width="5.4"/></svg>
<span style="position:absolute;top:761px;font:bold 11px/1 'Liberation Sans',sans-serif;color:#000;white-space:nowrap;left:-31.80px;width:400px;text-align:center;letter-spacing:0.7px;-webkit-text-stroke:0.35px #000;">Regulier</span>
<span style="position:absolute;top:776px;font:normal 10px/1 'Liberation Sans',sans-serif;color:#111;white-space:nowrap;left:-31.80px;width:400px;text-align:center;letter-spacing:0.29px;">94.22%</span>
<div style="position:absolute;left:400.7px;top:735.9px;width:26.4px;height:6.2px;background:#08c2dc;border-radius:3.1px;"></div>
<div style="position:absolute;left:400.7px;top:787.2px;width:26.4px;height:4.8px;background:#fdb52b;border-radius:2.4px;"></div>
<span style="position:absolute;top:732px;font:normal 13px/1 'Liberation Sans',sans-serif;color:#a2a3b0;white-space:nowrap;left:440.80px;letter-spacing:0.37px;">Regulier</span>
<span style="position:absolute;top:752px;font:normal 13px/1 'Liberation Sans',sans-serif;color:#a2a3b0;white-space:nowrap;right:1394.9px;letter-spacing:0.3px;">22</span>
<span style="position:absolute;top:783px;font:normal 13px/1 'Liberation Sans',sans-serif;color:#a2a3b0;white-space:nowrap;left:440.80px;letter-spacing:0.45px;">Overwerk</span>
<span style="position:absolute;top:802px;font:normal 13px/1 'Liberation Sans',sans-serif;color:#fbb62d;white-space:nowrap;right:1386.9px;letter-spacing:0.2px;">1.35</span>
<span style="position:absolute;top:659px;font:bold 17.5px/1 'Liberation Sans',sans-serif;color:#000;white-space:nowrap;left:705.00px;letter-spacing:0.62px;">Weektotaal</span>
<span style="position:absolute;top:683px;font:normal 13px/1 'Liberation Sans',sans-serif;color:#a2a3b0;white-space:nowrap;left:705.00px;letter-spacing:0.14px;">Mon Jul 4, 2022 - Sun Jul 10, 2022</span>
<svg width="100" height="100" viewBox="0 0 100 100" style="left:713.8px;top:722.8px"><path d="M27.83 86.90A43.05 43.05 0 1 1 51.05 93.04" fill="none" stroke="#03c3dc" stroke-width="11.1"/><path d="M33.86 79.12A33.3 33.3 0 1 1 50.00 83.30" fill="none" stroke="#03c3dc" stroke-width="1.5"/><path d="M48.59 90.48A40.5 40.5 0 0 1 31.93 86.24" fill="none" stroke="#ecc957" stroke-width="5.4"/></svg>
<span style="position:absolute;top:761px;font:bold 11px/1 'Liberation Sans',sans-serif;color:#000;white-space:nowrap;left:564.20px;width:400px;text-align:center;letter-spacing:0.7px;-webkit-text-stroke:0.35px #000;">Regulier</span>
<span style="position:absolute;top:776px;font:normal 10px/1 'Liberation Sans',sans-serif;color:#111;white-space:nowrap;left:564.20px;width:400px;text-align:center;letter-spacing:0.29px;">94.22%</span>
<div style="position:absolute;left:996.7px;top:735.9px;width:26.4px;height:6.2px;background:#08c2dc;border-radius:3.1px;"></div>
<div style="position:absolute;left:996.7px;top:787.2px;width:26.4px;height:4.8px;background:#fdb52b;border-radius:2.4px;"></div>
<span style="position:absolute;top:732px;font:italic normal 13px/1 'Liberation Sans',sans-serif;color:#a2a3b0;white-space:nowrap;left:1037.60px;letter-spacing:0.37px;">Regulier</span>
<span style="position:absolute;top:752px;font:normal 13px/1 'Liberation Sans',sans-serif;color:#a2a3b0;white-space:nowrap;right:798.9000000000001px;letter-spacing:0.3px;">66</span>
<span style="position:absolute;top:783px;font:italic normal 13px/1 'Liberation Sans',sans-serif;color:#a2a3b0;white-space:nowrap;left:1037.60px;letter-spacing:0.45px;">Overwerk</span>
<span style="position:absolute;top:802px;font:normal 13px/1 'Liberation Sans',sans-serif;color:#fbb62d;white-space:nowrap;right:790.9000000000001px;letter-spacing:0.2px;">4.05</span>
<span style="position:absolute;top:659px;font:bold 17.5px/1 'Liberation Sans',sans-serif;color:#000;white-space:nowrap;left:1301.90px;letter-spacing:0.38px;">Totaal periode</span>
<span style="position:absolute;top:683px;font:normal 13px/1 'Liberation Sans',sans-serif;color:#a2a3b0;white-space:nowrap;left:1301.90px;letter-spacing:0.14px;">Mon Jul 4, 2022 - Sun Jul 10, 2022</span>
<svg width="100" height="100" viewBox="0 0 100 100" style="left:1311.1px;top:722.8px"><path d="M27.83 86.90A43.05 43.05 0 1 1 51.05 93.04" fill="none" stroke="#03c3dc" stroke-width="11.1"/><path d="M33.86 79.12A33.3 33.3 0 1 1 50.00 83.30" fill="none" stroke="#03c3dc" stroke-width="1.5"/><path d="M48.59 90.48A40.5 40.5 0 0 1 31.93 86.24" fill="none" stroke="#ecc957" stroke-width="5.4"/></svg>
<span style="position:absolute;top:761px;font:bold 11px/1 'Liberation Sans',sans-serif;color:#000;white-space:nowrap;left:1161.10px;width:400px;text-align:center;letter-spacing:0.7px;-webkit-text-stroke:0.35px #000;">Regulier</span>
<span style="position:absolute;top:776px;font:normal 10px/1 'Liberation Sans',sans-serif;color:#111;white-space:nowrap;left:1161.10px;width:400px;text-align:center;letter-spacing:0.29px;">94.22%</span>
<div style="position:absolute;left:1593.6000000000001px;top:735.9px;width:26.4px;height:6.2px;background:#08c2dc;border-radius:3.1px;"></div>
<div style="position:absolute;left:1593.6000000000001px;top:787.2px;width:26.4px;height:4.8px;background:#fdb52b;border-radius:2.4px;"></div>
<span style="position:absolute;top:732px;font:italic normal 13px/1 'Liberation Sans',sans-serif;color:#a2a3b0;white-space:nowrap;left:1634.50px;letter-spacing:0.37px;">Regulier</span>
<span style="position:absolute;top:752px;font:normal 13px/1 'Liberation Sans',sans-serif;color:#a2a3b0;white-space:nowrap;right:202.0px;letter-spacing:0.3px;">66</span>
<span style="position:absolute;top:783px;font:italic normal 13px/1 'Liberation Sans',sans-serif;color:#a2a3b0;white-space:nowrap;left:1634.50px;letter-spacing:0.45px;">Overwerk</span>
<span style="position:absolute;top:802px;font:normal 13px/1 'Liberation Sans',sans-serif;color:#fbb62d;white-space:nowrap;right:194.0px;letter-spacing:0.2px;">4.05</span>
<div style="position:absolute;left:93px;top:865px;width:583px;height:20px;background:#fff;"></div>
<div style="position:absolute;left:696px;top:865px;width:583.5px;height:20px;background:#fff;"></div>
<div style="position:absolute;left:1299px;top:865px;width:583px;height:20px;background:#fff;"></div>
<div style="position:absolute;left:1530px;top:837px;width:177px;height:32px;background:#1fb8fb;border-radius:16px;background:linear-gradient(105deg,#1fb9fc 0%,#2aaaf7 45%,#3f8fee 75%,#5670e0 100%);"></div>
<span style="position:absolute;top:846px;font:normal 14px/1 'Liberation Sans',sans-serif;color:#fff;white-space:nowrap;left:1556.00px;letter-spacing:0.29px;">Portlets aanpassen</span>
<div style="position:absolute;left:1771px;top:827px;width:106px;height:46px;background:#9d0000;border-radius:23px;"></div>
<span style="position:absolute;top:843px;font:bold 15.5px/1 'Liberation Sans',sans-serif;color:#fff;white-space:nowrap;left:1821.30px;letter-spacing:-0.17px;">Help</span>
<svg width="15" height="12" viewBox="0 0 15 12" style="left:197px;top:24px;"><g fill="none" stroke="#fff" stroke-linecap="round" stroke-linejoin="round" stroke-width="0.9"><ellipse cx="7.5" cy="6" rx="3.6" ry="4.6"/><path d="M7.5 3.6V8.6M6.6 4.5L7.5 3.6"/><path d="M3.2 1.6C1.6 3.5 1.6 8.5 3.2 10.4M1.6 2.4C0.4 4.2 0.4 7.8 1.6 9.6M11.8 1.6C13.4 3.5 13.4 8.5 11.8 10.4M13.4 2.4C14.6 4.2 14.6 7.8 13.4 9.6"/></g></svg>
<svg width="11" height="6" viewBox="0 0 11 6" style="left:237.6px;top:28.7px;"><path d="M0.6 0.6L5.1 4.3L9.6 0.6" fill="none" stroke="#fff" stroke-linecap="round" stroke-linejoin="round" stroke-width="1.1"/></svg>
<svg width="14" height="14" viewBox="0 0 14 14" style="left:1383px;top:23px;"><g fill="none" stroke="#b9b9c8" stroke-width="1.1" stroke-linecap="round"><circle cx="6" cy="6" r="4.6"/><path d="M9.4 9.4L13 13"/></g></svg>
<svg width="18" height="20" viewBox="0 0 18 20" style="left:1791px;top:20px;"><g fill="none" stroke="#c9c7e8" stroke-width="0.9" stroke-linejoin="round"><path d="M7.6 2.4L9 0.8L10.4 2.4"/><path d="M1 15.5C3 14 3.2 11 3.2 8C3.2 4 5.5 2.4 9 2.4C12.5 2.4 14.8 4 14.8 8C14.8 11 15 14 17 15.5C12 17.2 6 17.2 1 15.5Z"/><path d="M7 17.6H11" stroke-width="1.3"/><path d="M4.8 5.2C6.5 4.4 11.5 4.4 13.2 5.2" stroke-width="0.7"/></g></svg>
<svg width="18" height="20" viewBox="0 0 18 20" style="left:1844px;top:20px;"><g fill="none" stroke="#fff" stroke-width="0.9" stroke-linecap="round" stroke-linejoin="round"><path d="M1.2 16.2V14.8C1.2 13 4 12 6 10.6C7 9.8 6.4 8.6 5.8 7.4C5.2 6 5.2 4.5 5.6 3.2C6.1 1.7 7.4 1 8.8 1C10.2 1 11.5 1.7 12 3.2C12.4 4.5 12.4 6 11.8 7.4C11.2 8.6 10.6 9.8 11.6 10.6C13.6 12 16.4 13 16.4 14.8V16.2"/><path d="M6 16.6L7.6 18.2L11.6 15"/></g></svg>
<svg width="15" height="9" viewBox="0 0 15 9" style="left:1843px;top:94.8px;"><path d="M0.8 8.2L7.5 1L14.2 8.2" fill="none" stroke="#111" stroke-width="1.5"/></svg>
<svg width="24" height="23" viewBox="0 0 24 23" style="left:108px;top:158.7px;"><g fill="none" stroke="#111" stroke-width="0.95" stroke-linejoin="round" stroke-linecap="round"><path d="M7 9H2.6L0.6 22H23.4L21.4 9H17"/><path d="M0.8 21.7H23.2" stroke-width="1.6" stroke="#444"/><path d="M12 17C10 13 7 10 7 6A5 5 0 0 1 17 6C17 10 14 13 12 17Z"/><circle cx="12" cy="5.6" r="2.3"/><path d="M4 18.5C6.5 20 9.5 17.8 12.5 17C15.5 16.2 18.5 15.5 19.8 12.5" stroke-dasharray="1.4 1.4" stroke-width="0.9"/></g></svg>
<svg width="24" height="23" viewBox="0 0 24 23" style="left:1163.5px;top:158.7px;"><g fill="none" stroke="#111" stroke-width="0.95" stroke-linejoin="round" stroke-linecap="round"><path d="M7 9H2.6L0.6 22H23.4L21.4 9H17"/><path d="M0.8 21.7H23.2" stroke-width="1.6" stroke="#444"/><path d="M12 17C10 13 7 10 7 6A5 5 0 0 1 17 6C17 10 14 13 12 17Z"/><circle cx="12" cy="5.6" r="2.3"/><path d="M4 18.5C6.5 20 9.5 17.8 12.5 17C15.5 16.2 18.5 15.5 19.8 12.5" stroke-dasharray="1.4 1.4" stroke-width="0.9"/></g></svg>
<svg width="14" height="14" viewBox="0 0 14 14" style="left:294.3px;top:163.2px;"><circle cx="7" cy="7" r="5.6" fill="none" stroke="#111" stroke-width="1.2"/><text x="7" y="10.2" text-anchor="middle" font-family="Liberation Sans,sans-serif" font-weight="bold" font-size="9" fill="#111">?</text></svg>
<svg width="14" height="14" viewBox="0 0 14 14" style="left:1316px;top:163.2px;"><circle cx="7" cy="7" r="5.6" fill="none" stroke="#111" stroke-width="1.2"/><text x="7" y="10.2" text-anchor="middle" font-family="Liberation Sans,sans-serif" font-weight="bold" font-size="9" fill="#111">?</text></svg>
<svg width="14" height="14" viewBox="0 0 14 14" style="left:1039.5px;top:164.5px;"><g fill="none" stroke="#4b5062" stroke-width="1.1" stroke-linecap="round" stroke-linejoin="round"><path d="M1.6 5.5C2.4 3 4.5 1.4 7 1.4C9 1.4 10.8 2.4 11.8 4M12.3 1.2V4.3H9.2"/><path d="M12.4 8.5C11.6 11 9.5 12.6 7 12.6C5 12.6 3.2 11.6 2.2 10M1.7 12.8V9.7H4.8"/></g></svg>
<svg width="13" height="11" viewBox="0 0 13 11" style="left:1084px;top:166px;"><g fill="none" stroke="#4b5062" stroke-width="1.1" stroke-linecap="round" stroke-linejoin="round"><path d="M1 10L12 1M7.5 0.8H12.2V5M1 5.8V10.2H5.6"/></g></svg>
<svg width="13" height="11" viewBox="0 0 13 11" style="left:1837px;top:166px;"><g fill="none" stroke="#4b5062" stroke-width="1.1" stroke-linecap="round" stroke-linejoin="round"><path d="M1 10L12 1M7.5 0.8H12.2V5M1 5.8V10.2H5.6"/></g></svg>
<svg width="12" height="13" viewBox="0 0 12 13" style="left:314.5px;top:215px;"><g fill="none" stroke="#3699e8" stroke-width="1.1"><path d="M11.2 4.2V0.6H0.6V12.4H11.2V8.8"/><path d="M11.5 6.5H4.2M6.8 3.8L4.1 6.5L6.8 9.2" stroke-linecap="round" stroke-linejoin="round"/></g></svg>
<svg width="12" height="13" viewBox="0 0 12 13" style="left:820.5px;top:215px;"><g fill="none" stroke="#8d90a0" stroke-width="1.1"><path d="M10.9 3.6V0.6H0.6V12.4H10.9V9.4"/><path d="M4.5 6.5H12M9.4 3.9L12 6.5L9.4 9.1" stroke-linecap="round" stroke-linejoin="round"/></g></svg>
<svg width="12.5" height="11.5" viewBox="0 0 12.5 11.5" style="left:115.5px;top:268px;"><g fill="none" stroke-width="0.85" stroke-linecap="round" stroke-linejoin="round"><path d="M3 0.6V10.4M0.8 8.2L3 10.6L5.2 8.2" stroke="#8f909d"/><path d="M9.4 10.8V0.8M7.2 3L9.4 0.6L11.6 3" stroke="#111"/></g></svg>
<svg width="12.5" height="11.5" viewBox="0 0 12.5 11.5" style="left:195.5px;top:268px;"><g fill="none" stroke-width="0.85" stroke-linecap="round" stroke-linejoin="round"><path d="M3 0.6V10.4M0.8 8.2L3 10.6L5.2 8.2" stroke="#8f909d"/><path d="M9.4 10.8V0.8M7.2 3L9.4 0.6L11.6 3" stroke="#8f909d"/></g></svg>
<svg width="12.5" height="11.5" viewBox="0 0 12.5 11.5" style="left:421.3px;top:268px;"><g fill="none" stroke-width="0.85" stroke-linecap="round" stroke-linejoin="round"><path d="M3 0.6V10.4M0.8 8.2L3 10.6L5.2 8.2" stroke="#8f909d"/><path d="M9.4 10.8V0.8M7.2 3L9.4 0.6L11.6 3" stroke="#8f909d"/></g></svg>
<svg width="12.5" height="11.5" viewBox="0 0 12.5 11.5" style="left:736.2px;top:268px;"><g fill="none" stroke-width="0.85" stroke-linecap="round" stroke-linejoin="round"><path d="M3 0.6V10.4M0.8 8.2L3 10.6L5.2 8.2" stroke="#8f909d"/><path d="M9.4 10.8V0.8M7.2 3L9.4 0.6L11.6 3" stroke="#8f909d"/></g></svg>
<svg width="12.5" height="11.5" viewBox="0 0 12.5 11.5" style="left:821px;top:268px;"><g fill="none" stroke-width="0.85" stroke-linecap="round" stroke-linejoin="round"><path d="M3 0.6V10.4M0.8 8.2L3 10.6L5.2 8.2" stroke="#8f909d"/><path d="M9.4 10.8V0.8M7.2 3L9.4 0.6L11.6 3" stroke="#8f909d"/></g></svg>
<svg width="20" height="20" viewBox="0 0 20 20" style="left:655px;top:306.2px;"><circle cx="10" cy="10" r="9.9" fill="#a11515"/><path d="M6.2 2.6C7.5 2 9 2.2 10.2 1.8L11.5 3.2L10.2 4.2L11.6 5.4L10 6.8L8.4 6.4L7.2 7.8L5.6 7.2L5 5.4Z M12.5 4.2L14.2 3.6L14.8 5L13.2 5.6Z M3.4 9.5C5 8.6 7 8.8 8.4 9.6C9.8 10.4 11.4 10.8 12 12C12.4 13.2 11 14 10.4 15C9.8 16.2 9.4 17.6 8 18.2C7.4 17 7.6 15.6 6.8 14.6C5.8 13.4 4 12.6 3.4 11Z M14 8.6L16.6 8.2L17.8 9.8L16.2 10.4L14.6 10Z" fill="#fff"/></svg>
<svg width="19" height="19.5" viewBox="0 0 19 19.5" style="left:993px;top:306.5px;"><g fill="none" stroke="#f0456e" stroke-width="1.5"><path d="M15.6 5.4V0.8H0.8V18.7H15.6V14.1"/><path d="M6.6 9.75H17.6M13.6 5.8L17.7 9.75L13.6 13.7" stroke-linejoin="miter"/></g></svg>
<svg width="18" height="18" viewBox="0 0 18 18" style="left:1164px;top:309px;"><path d="M5 9.2L7.8 12L13.2 5.6" fill="none" stroke="#5d62d8" stroke-width="2" stroke-linecap="round" stroke-linejoin="round"/></svg>
<svg width="18" height="18" viewBox="0 0 18 18" style="left:1164px;top:368px;"><path d="M5 9.2L7.8 12L13.2 5.6" fill="none" stroke="#5d62d8" stroke-width="2" stroke-linecap="round" stroke-linejoin="round"/></svg>
<svg width="11" height="8" viewBox="0 0 11 8" style="left:1430px;top:277px;"><path d="M1 1.5L5.5 6L10 1.5" fill="none" stroke="#111" stroke-width="1.7"/></svg>
<svg width="10" height="12" viewBox="0 0 10 12" style="left:114px;top:619px;"><path d="M8 1.8L2.6 6.6L8 11.4" fill="none" stroke="#4a4a4a" stroke-width="2.6"/></svg>
<svg width="10" height="12" viewBox="0 0 10 12" style="left:1098px;top:619px;"><path d="M2 1.8L7.4 6.6L2 11.4" fill="none" stroke="#4a4a4a" stroke-width="2.6"/></svg>
<svg width="22" height="22" viewBox="0 0 22 22" style="left:1792.5px;top:839px;"><path d="M11 2.2A8.6 8.6 0 1 1 6 17.8L2.2 19.2L3.6 15.4A8.6 8.6 0 0 1 11 2.2Z" fill="none" stroke="#fff" stroke-width="2.6" stroke-linejoin="round"/></svg>
</body></html>
